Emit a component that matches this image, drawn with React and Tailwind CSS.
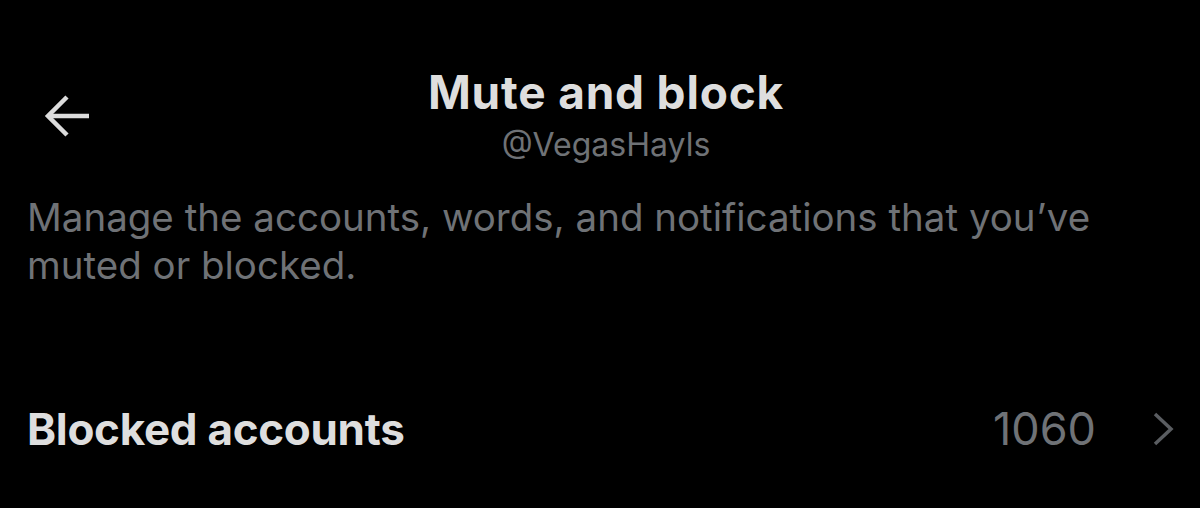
import { useState } from 'react';

const BackArrow = () => (
    <svg width="48" height="44" viewBox="0 0 48 44" fill="none" stroke="#dcdcdc" strokeWidth="4.5" strokeLinecap="butt">
        <path d="M25 3 L6 22 L25 41" />
        <path d="M6 22 L47 22" />
    </svg>
);

const Chevron = () => (
    <svg width="22" height="34" viewBox="0 0 22 34" fill="none" stroke="#5a5d61" strokeWidth="3.5">
        <path d="M3 2 L19 17 L3 32" />
    </svg>
);

const MuteAndBlock = () => {
    const [blockedCount] = useState(1060);

    return (
        <div className="w-full h-[508px] bg-black text-[#dedede] overflow-hidden" style={{ fontFamily: 'Inter, "Liberation Sans", sans-serif' }}>
            <div className="grid grid-cols-[1fr_auto_1fr] items-center pt-[66px]">
                <button className="justify-self-start pl-[42px] mt-[2px]">
                    <BackArrow />
                </button>
                <div className="flex flex-col items-center pl-[12px]">
                    <h1 className="text-[46px] font-bold leading-[52px] tracking-[0.8px]">Mute and block</h1>
                    <p className="text-[32px] leading-[38px] text-[#6f7276] mt-[8px]">@VegasHayls</p>
                </div>
                <div />
            </div>

            <p className="px-[27px] mt-[29px] max-w-[1140px] text-[38.5px] leading-[48px] text-[#6f7276]">
                Manage the accounts, words, and notifications that you’ve muted or blocked.
            </p>

            <div className="flex items-center justify-between pl-[27px] pr-[26px] mt-[106px]">
                <span className="text-[44px] font-bold tracking-[-0.3px]">Blocked accounts</span>
                <div className="flex items-center gap-[56px]">
                    <span className="text-[45px] text-[#6f7276]">{blockedCount}</span>
                    <Chevron />
                </div>
            </div>
        </div>
    );
};

export default MuteAndBlock;
